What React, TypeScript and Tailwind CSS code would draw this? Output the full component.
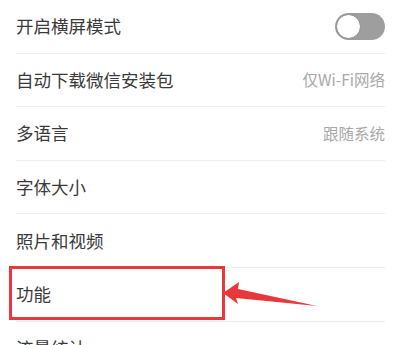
import React from "react";

// 설정 목록 한 줄
interface RowProps {
  label: string;
  value?: string;
  toggle?: boolean;
  highlight?: boolean;
  last?: boolean;
}

const Toggle: React.FC = () => (
  <div className="relative h-[27px] w-[50px] rounded-full bg-[#9e9e9e]">
    <div className="absolute left-[1px] top-[1px] h-[25px] w-[25px] rounded-full border border-[#8a8a8a] bg-white" />
  </div>
);

const Row: React.FC<RowProps> = ({ label, value, toggle, highlight, last }) => (
  <div className="relative">
    <div
      className={
        last
          ? "flex h-[53.6px] items-center justify-between"
          : "flex h-[53.6px] items-center justify-between border-b border-[#ececec]"
      }
    >
      <span className="text-[17.5px] text-[#3a3a3a]">{label}</span>
      {value && <span className="text-[15.5px] text-[#a8a8a8]">{value}</span>}
      {toggle && <Toggle />}
    </div>
    {highlight && (
      <>
        {/* 강조 박스 */}
        <div className="absolute left-[-7px] top-[-2px] h-[54px] w-[216px] border-[3px] border-[#e8383b]" />
        {/* 화살표 */}
        <svg
          className="absolute left-[207px] top-[10px]"
          width="100"
          height="30"
          viewBox="0 0 100 30"
        >
          <polygon
            points="0,15 16,4 15,11 94,28 13,20 15,26"
            fill="#e8383b"
          />
        </svg>
      </>
    )}
  </div>
);

export default function App() {
  return (
    <div
      className="h-[345px] w-[401px] overflow-hidden bg-white px-4"
      style={{ fontFamily: '"Noto Sans CJK SC", "Noto Sans", sans-serif' }}
    >
      <Row label="开启横屏模式" toggle />
      <Row label="自动下载微信安装包" value="仅Wi-Fi网络" />
      <Row label="多语言" value="跟随系统" />
      <Row label="字体大小" />
      <Row label="照片和视频" />
      <Row label="功能" highlight />
      <Row label="流量统计" last />
    </div>
  );
}
